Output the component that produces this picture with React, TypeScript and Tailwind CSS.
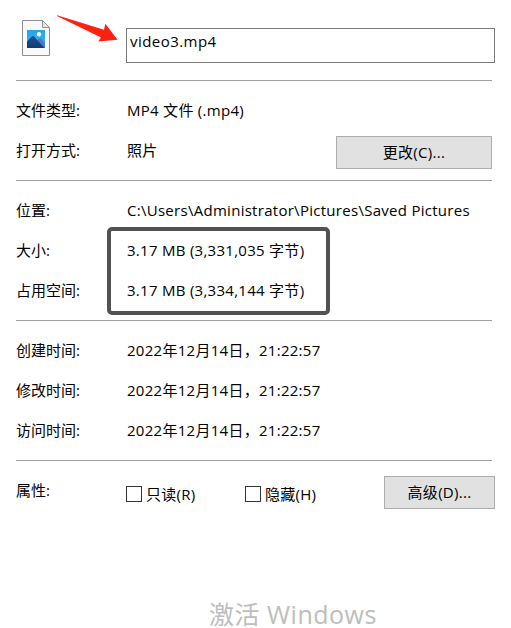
import { ReactNode } from 'react';

interface RowProps {
  label: string;
  children: ReactNode;
}

function Row({ label, children }: RowProps) {
  return (
    <div className="flex h-10 items-center pb-0.5">
      <div className="w-[111px] shrink-0">{label}</div>
      <div className="flex flex-1 items-center tracking-[0.28px] whitespace-pre">{children}</div>
    </div>
  );
}

function Divider() {
  return <div className="h-px w-[476px] bg-[#a0a0a0]" />;
}

function PictureFileIcon() {
  return (
    <svg className="mt-5 ml-1.5 h-9 w-7 shrink-0" viewBox="0 0 28 36">
      <defs>
        <linearGradient id="sky" x1="0" y1="0" x2="0" y2="1">
          <stop offset="0" stopColor="#28a4e8" />
          <stop offset="1" stopColor="#35b8f0" />
        </linearGradient>
        <linearGradient id="hill" x1="0" y1="0" x2="0" y2="1">
          <stop offset="0" stopColor="#1d5093" />
          <stop offset="1" stopColor="#123b76" />
        </linearGradient>
      </defs>
      <path d="M.5.5h20l7 7v28H.5z" fill="#f9f9f9" stroke="#909090" />
      <path d="M20.5.5v7h7z" fill="#e6e6e6" stroke="#909090" />
      <path d="M5 10h18v18H5z" fill="url(#sky)" />
      <path d="M13 23l4-4.3q1-.8 2 0l4 4V28H13z" fill="#4878d0" />
      <path d="M5 21.5l5-5q1-.9 2 0L22.5 28H5z" fill="url(#hill)" />
      <circle cx="17" cy="14.2" r="2.2" fill="#f3f8fc" />
    </svg>
  );
}

function Checkbox({ label }: { label: string }) {
  return (
    <label className="flex w-[119px] items-center gap-1 pt-[7px]">
      <span className="h-4 w-4 border border-[#333] bg-white" />
      <span className="leading-4">{label}</span>
    </label>
  );
}

export default function App() {
  return (
    <div className="relative h-[628px] w-[511px] bg-white pl-4 font-['Open_Sans','Noto_Sans_CJK_SC',sans-serif] text-[15px] leading-5 text-black">
      <div className="flex h-20">
        <PictureFileIcon />
        <div className="mt-7 ml-[76px] h-[35px] w-[369px] border border-[#7a7a7a] pt-0.5 pl-[3px] tracking-[0.45px]">
          video3.mp4
        </div>
      </div>
      <Divider />
      <div className="pt-2.5 pb-[9px]">
        <Row label="文件类型:">MP4 文件 (.mp4)</Row>
        <Row label="打开方式:">
          照片
          <button className="mt-1 mr-[19px] ml-auto h-[33px] w-[156px] border border-[#adadad] bg-[#e1e1e1]">
            更改(C)...
          </button>
        </Row>
      </div>
      <Divider />
      <div className="pt-2.5 pb-[9px]">
        <Row label="位置:">C:\Users\Administrator\Pictures\Saved Pictures</Row>
        <Row label="大小:">3.17 MB (3,331,035 字节)</Row>
        <Row label="占用空间:">3.17 MB (3,334,144 字节)</Row>
      </div>
      <Divider />
      <div className="pt-2.5 pb-[9px]">
        <Row label="创建时间:">2022年12月14日，21:22:57</Row>
        <Row label="修改时间:">2022年12月14日，21:22:57</Row>
        <Row label="访问时间:">2022年12月14日，21:22:57</Row>
      </div>
      <Divider />
      <div className="pt-2.5">
        <Row label="属性:">
          <div className="-ml-px flex">
            <Checkbox label="只读(R)" />
            <Checkbox label="隐藏(H)" />
          </div>
          <button className="mt-1 mr-4 ml-auto h-[33px] w-[111px] border border-[#adadad] bg-[#e1e1e1]">
            高级(D)...
          </button>
        </Row>
      </div>
      <div className="mt-[89px] ml-[193px] text-[25px] leading-7 tracking-[0.5px] whitespace-pre text-[#bdbdbd]">
        激活 Windows
      </div>

      {/* annotations on top of the dialog */}
      <svg className="absolute top-3 left-14 h-8 w-16" viewBox="0 0 64 32">
        <path d="M1 3.2L48 17.8l1.3-6L61.6 27.7l-19.4 1.7 2.8-3.8L1 4z" fill="#ff2010" />
      </svg>
      <div className="absolute top-[227px] left-[107px] h-[88px] w-[223px] rounded-[5px] border-4 border-[#525252]" />
    </div>
  );
}
